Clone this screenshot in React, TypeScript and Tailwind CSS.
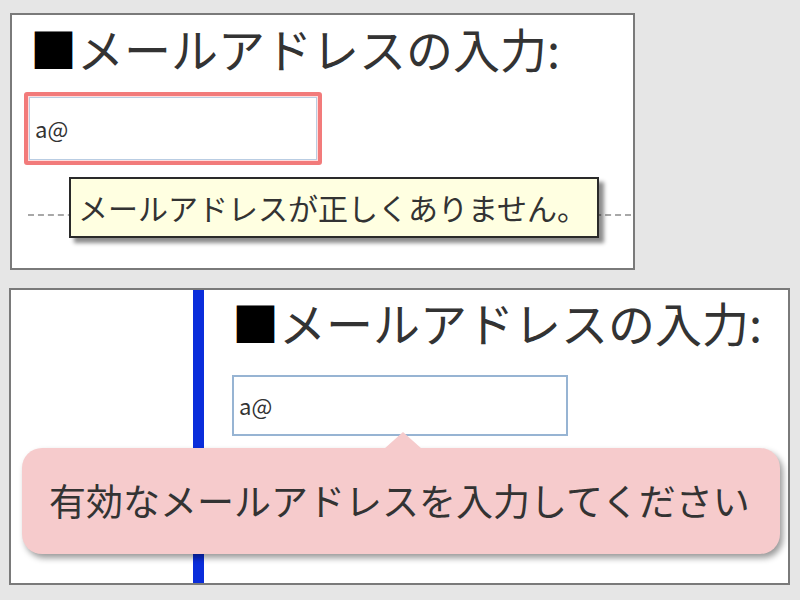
export default function App() {
  const jp = { fontFamily: '"Noto Sans CJK JP", "Noto Sans", sans-serif' };

  return (
    <div className="w-[800px] h-[600px] bg-[#e6e6e6] flex flex-col overflow-hidden" style={jp}>
      {/* 上: 従来のエラーツールチップ */}
      <div className="relative ml-[10px] mt-[13px] w-[625px] h-[257px] border-2 border-[#7a7a7a] bg-white">
        <div className="pl-[18px] pt-[9px] text-[47px] leading-[47px] text-[#333]">
          <span className="text-black">■</span>メールアドレスの入力:
        </div>
        <div className="ml-[12px] mt-[21px] w-[298px] h-[73px] rounded-[3px] border-[4px] border-[#f27b7b] p-[1px] bg-[#fdd]">
          <div className="h-full border border-[#b9cde3] bg-white flex items-center pl-[5px] text-[22px] text-[#333]">
            a@
          </div>
        </div>
        <div className="mt-[49px] ml-[16px] mr-[2px] border-t-2 border-dashed border-[#a8a8a8]" />
        <div className="absolute left-[57px] top-[162px] w-[530px] h-[61px] border-2 border-[#2a2a2a] bg-[#ffffe1] shadow-[5px_5px_4px_rgba(0,0,0,0.45)] flex items-center pl-[7px] text-[30px] text-[#333]">
          メールアドレスが正しくありません。
        </div>
      </div>

      {/* 下: 新しいバリデーションバブル */}
      <div className="relative ml-[9px] mt-[18px] w-[781px] h-[297px] border-2 border-[#7a7a7a] bg-white flex">
        <div className="w-[182px] shrink-0" />
        <div className="w-[11px] shrink-0 bg-[#0a2ddb]" />
        <div className="pl-[28px] pt-[8px]">
          <div className="text-[47px] leading-[47px] text-[#333]">
            <span className="text-black">■</span>メールアドレスの入力:
          </div>
          <div className="mt-[30px] w-[336px] h-[61px] border-2 border-[#97b4d3] bg-white flex items-center pl-[5px] text-[22px] text-[#333]">
            a@
          </div>
        </div>
        <div className="absolute left-[11px] top-[158px] w-[758px] h-[106px] rounded-[20px] bg-[#f6cbcc] shadow-[3px_4px_6px_rgba(0,0,0,0.4)] flex items-center pl-[27px] text-[37px] text-[#333]">
          <svg className="absolute left-[362px] -top-[16px]" width="38" height="17" viewBox="0 0 38 17">
            <path d="M0 17 L19 0 L38 17 Z" fill="#f6cbcc" />
          </svg>
          有効なメールアドレスを入力してください
        </div>
      </div>
    </div>
  );
}
